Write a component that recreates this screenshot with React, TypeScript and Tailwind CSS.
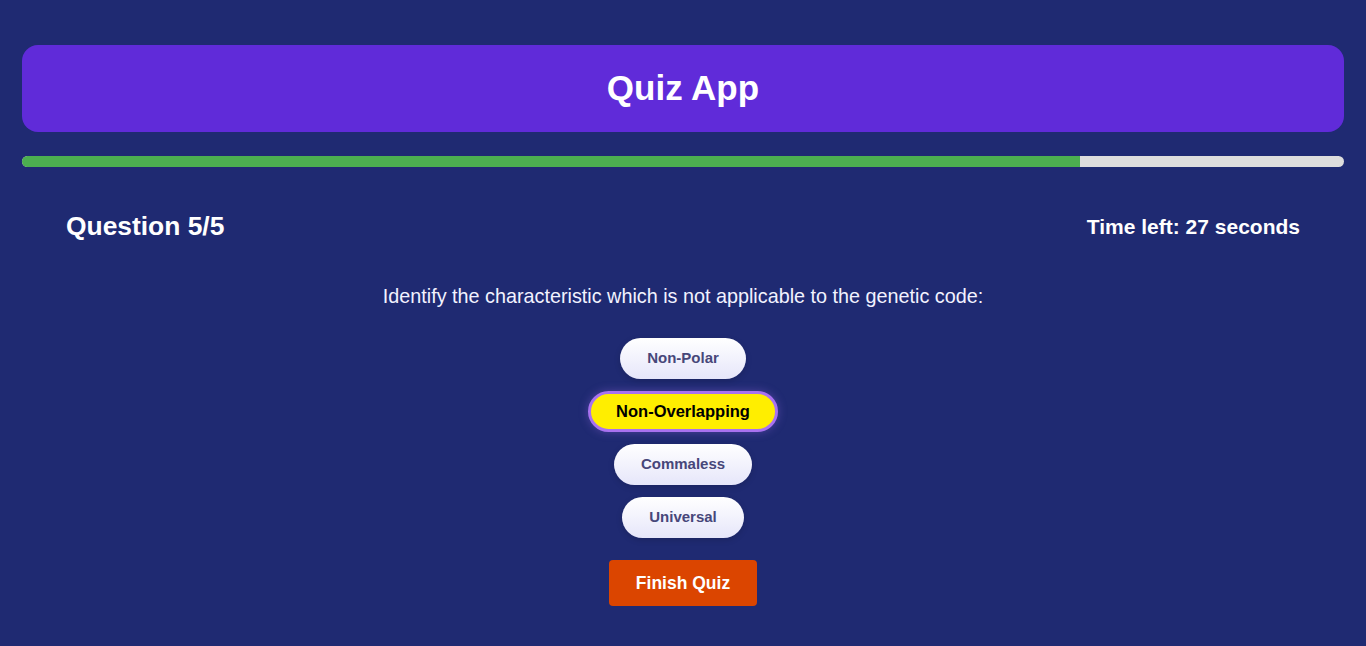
import React from "react";

const options = ["Non-Polar", "Non-Overlapping", "Commaless", "Universal"];

export default function App() {
  const selected = 1;
  return (
    <div
      className="min-h-[646px] w-full bg-[#1f2a72] px-[22px] pt-[45px]"
      style={{ fontFamily: '"Liberation Sans", Arial, sans-serif' }}
    >
      <div className="flex h-[87px] items-center justify-center rounded-[16px] bg-[#602bd9]">
        <h1 className="mt-[-2px] text-[35px] font-bold leading-none text-white">Quiz App</h1>
      </div>

      <div className="mt-[24px] h-[11px] w-full overflow-hidden rounded-full bg-[#dddddd]">
        <div className="h-full bg-[#4caf50]" style={{ width: "80%" }} />
      </div>

      <div className="mt-[44px] flex items-center justify-between px-[44px]">
        <h2 className="text-[26.4px] font-bold leading-[28px] text-white">Question 5/5</h2>
        <span className="mt-[2px] text-[21px] font-bold leading-[28px] text-white">Time left: 27 seconds</span>
      </div>

      <p className="mt-[44px] text-center text-[19.8px] leading-[22px] text-[#f2f2ff]">
        Identify the characteristic which is not applicable to the genetic code:
      </p>

      <div className="mt-[31px] flex flex-col items-center gap-[12px]">
        {options.map((o, i) =>
          i === selected ? (
            <button
              key={o}
              className="flex h-[41px] items-center rounded-full border-[3px] border-[#a872f0] bg-[#ffee00] px-[25px] text-[16.5px] font-bold text-black shadow-[0_0_10px_rgba(168,114,240,0.35)]"
            >
              {o}
            </button>
          ) : (
            <button
              key={o}
              className="flex h-[41px] items-center rounded-full border-[3px] border-transparent bg-gradient-to-b from-white to-[#e6e6fa] bg-origin-border px-[24px] text-[15px] font-bold text-[#47477a] shadow-[0_2px_6px_rgba(0,0,0,0.15)]"
            >
              {o}
            </button>
          )
        )}
      </div>

      <div className="mt-[22px] flex justify-center">
        <button className="h-[46px] w-[148px] rounded-[4px] bg-[#db4500] text-[17.5px] font-bold text-white">
          Finish Quiz
        </button>
      </div>
    </div>
  );
}
